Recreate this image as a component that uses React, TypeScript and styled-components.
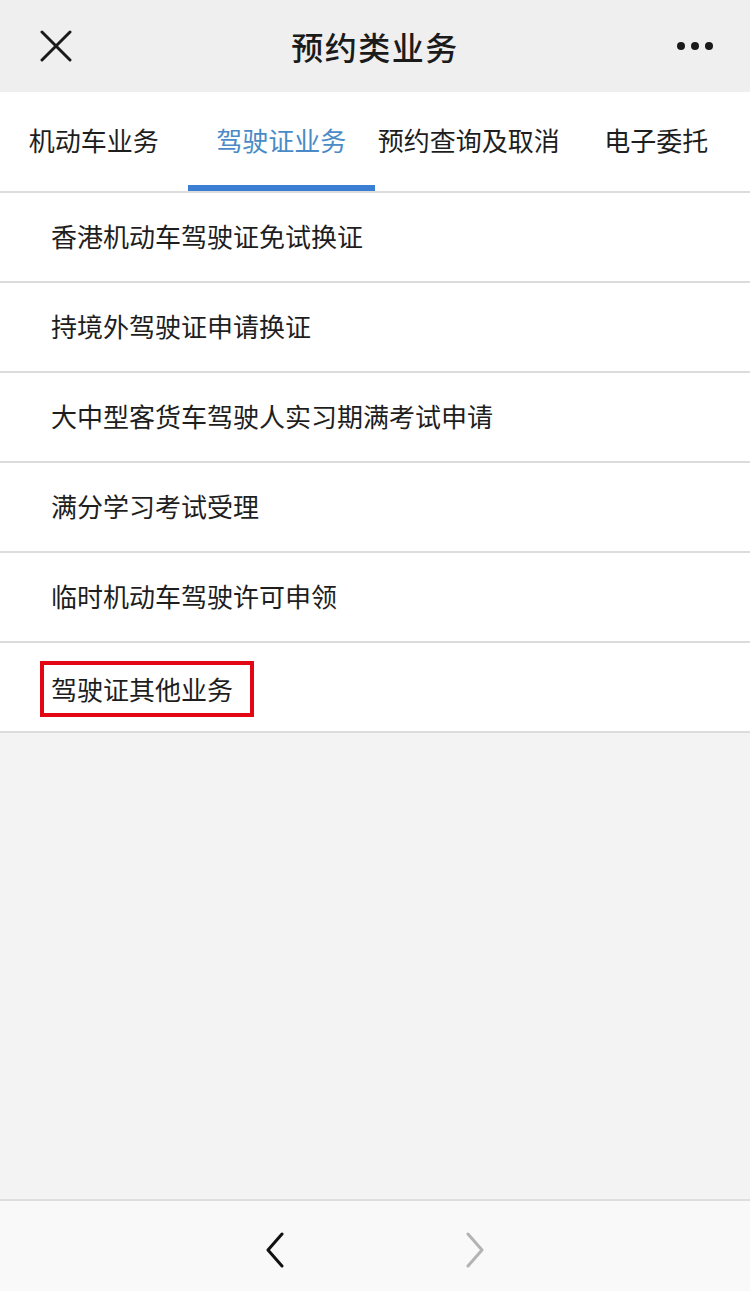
import styled, { createGlobalStyle } from "styled-components";

const GlobalStyle = createGlobalStyle`
  html, body {
    margin: 0;
    padding: 0;
    background: #f3f3f3;
  }
  body {
    font-family: "Noto Sans CJK SC", "Noto Sans", sans-serif;
    color: #1a1a1a;
  }
  * {
    box-sizing: border-box;
  }
`;

const Page = styled.div`
  width: 750px;
  height: 1291px;
  display: flex;
  flex-direction: column;
  background: #f3f3f3;
  overflow: hidden;
`;

const NavBar = styled.header`
  height: 92px;
  flex-shrink: 0;
  background: #efefef;
  display: grid;
  grid-template-columns: 120px 1fr 120px;
  align-items: center;
`;

const NavButton = styled.div<{ align: "left" | "right" }>`
  display: flex;
  justify-content: ${(p) => (p.align === "left" ? "flex-start" : "flex-end")};
  padding: ${(p) => (p.align === "left" ? "0 0 0 40px" : "0 36px 0 0")};
  align-items: center;
`;

const Title = styled.h1`
  margin: 0;
  text-align: center;
  font-size: 32px;
  font-weight: 500;
  color: #1b1b1b;
  letter-spacing: 1.5px;
`;

const Tabs = styled.nav`
  height: 101px;
  flex-shrink: 0;
  display: grid;
  grid-template-columns: repeat(4, 1fr);
  background: #fff;
  border-bottom: 2px solid #dcdcdc;
`;

const Tab = styled.div<{ active?: boolean }>`
  position: relative;
  display: flex;
  align-items: center;
  justify-content: center;
  font-size: 26px;
  white-space: nowrap;
  color: ${(p) => (p.active ? "#4a8bc6" : "#1e1e1e")};
  padding-bottom: 5px;

  &::after {
    content: "";
    display: ${(p) => (p.active ? "block" : "none")};
    position: absolute;
    left: 0;
    right: 0;
    bottom: 0;
    height: 6px;
    background: #3a7fd4;
  }
`;

const List = styled.ul`
  list-style: none;
  margin: 0;
  padding: 0;
  background: #fff;
`;

const Row = styled.li`
  height: 90px;
  display: flex;
  align-items: center;
  padding-left: 51px;
  padding-bottom: 4px;
  font-size: 26px;
  color: #1e1e1e;
  border-bottom: 2px solid #dcdcdc;
`;

const Marked = styled.span`
  display: inline-block;
  margin-left: -11px;
  margin-top: 8px;
  padding: 6px 17px 6px 7px;
  line-height: 36px;
  border: 4px solid #e30613;
`;

const Filler = styled.div`
  flex: 1;
  background: #f3f3f3;
`;

const Toolbar = styled.footer`
  height: 92px;
  flex-shrink: 0;
  background: #f9f9fa;
  border-top: 2px solid #dedede;
  display: flex;
  align-items: center;
  justify-content: center;
  gap: 180px;
  padding-top: 8px;
`;

const items = [
  "香港机动车驾驶证免试换证",
  "持境外驾驶证申请换证",
  "大中型客货车驾驶人实习期满考试申请",
  "满分学习考试受理",
  "临时机动车驾驶许可申领",
];

const tabs = ["机动车业务", "驾驶证业务", "预约查询及取消", "电子委托"];

const App = () => {
  return (
    <>
      <GlobalStyle />
      <Page>
        <NavBar>
          <NavButton align="left">
            <svg width="32" height="32" viewBox="0 0 32 32">
              <path d="M2 2 L30 30 M30 2 L2 30" stroke="#1a1a1a" strokeWidth="3" strokeLinecap="round" />
            </svg>
          </NavButton>
          <Title>预约类业务</Title>
          <NavButton align="right">
            <svg width="38" height="10" viewBox="0 0 38 10">
              <circle cx="5" cy="5" r="4" fill="#1a1a1a" />
              <circle cx="19" cy="5" r="4" fill="#1a1a1a" />
              <circle cx="33" cy="5" r="4" fill="#1a1a1a" />
            </svg>
          </NavButton>
        </NavBar>
        <Tabs>
          {tabs.map((t, i) => (
            <Tab key={t} active={i === 1}>
              {t}
            </Tab>
          ))}
        </Tabs>
        <List>
          {items.map((item) => (
            <Row key={item}>{item}</Row>
          ))}
          <Row>
            <Marked>驾驶证其他业务</Marked>
          </Row>
        </List>
        <Filler />
        <Toolbar>
          <svg width="20" height="36" viewBox="0 0 20 36">
            <path d="M17 2 L3 18 L17 34" fill="none" stroke="#111" strokeWidth="3" strokeLinecap="round" strokeLinejoin="round" />
          </svg>
          <svg width="20" height="36" viewBox="0 0 20 36">
            <path d="M3 2 L17 18 L3 34" fill="none" stroke="#b3b3b3" strokeWidth="3" strokeLinecap="round" strokeLinejoin="round" />
          </svg>
        </Toolbar>
      </Page>
    </>
  );
};

export default App;
